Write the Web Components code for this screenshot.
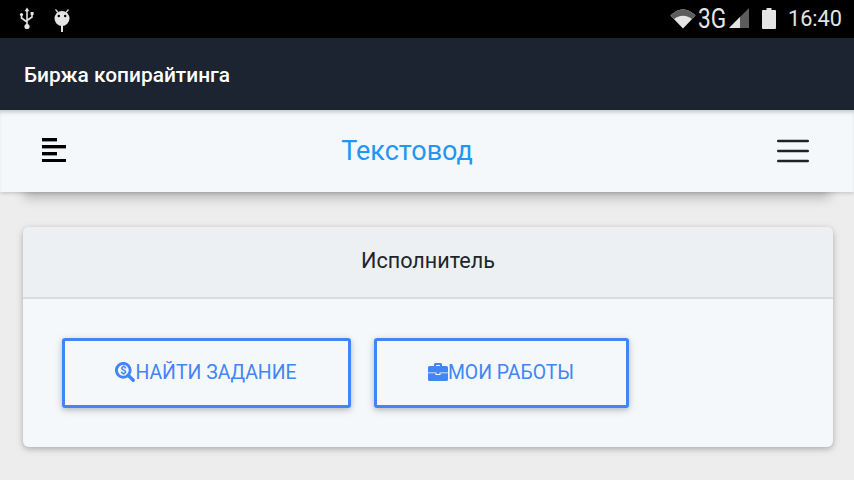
<!DOCTYPE html>
<html lang="ru">
<head>
<meta charset="utf-8">
<title>Текстовод</title>
<style>
  html, body { margin: 0; height: 100%; }
  body { background: #ededed; font-family: Roboto, "Liberation Sans", sans-serif; overflow: hidden; }
</style>
</head>
<body>
<status-bar></status-bar>
<app-title>Биржа копирайтинга</app-title>
<top-nav>Текстовод</top-nav>
<role-card heading="Исполнитель">
  <action-button icon="search" style="width:289px">НАЙТИ ЗАДАНИЕ</action-button>
  <action-button icon="case" style="width:255px">МОИ РАБОТЫ</action-button>
</role-card>

<script>
class StatusBar extends HTMLElement {
  constructor() {
    super();
    this.attachShadow({ mode: "open" });
    this.shadowRoot.innerHTML = `
<style>
:host { display: flex; align-items: center; height: 38px; background: #000; color: #e4e4e4; padding: 0 12px 0 19px; }
svg { display: block; flex-shrink: 0; }
.usb { margin-right: 18px; }
.sp { flex: 1; }
.up { margin-top: -2px; }
.net { display: block; width: 28px; font-size: 27px; font-weight: 400; line-height: 38px; margin-left: 2px; margin-top: -1px; transform: scaleX(.84); transform-origin: left center; white-space: nowrap; }
.sig { margin-left: 3px; }
.bat { margin-left: 13px; }
.time { font-size: 21.7px; line-height: 38px; margin-left: 12px; }
</style>
<svg class="usb" width="16" height="24" viewBox="0 0 16 24" fill="none" stroke="#e4e4e4" stroke-width="1.6">
  <path d="M8 3v15M8 15L2.5 11V8M8 13.5l5-3.500V7.500"/>
  <path d="M8 .5L5.6 4.2h4.800z" fill="#e4e4e4" stroke="none"/>
  <circle cx="8" cy="19.500" r="2.600" fill="#e4e4e4" stroke="none"/>
  <circle cx="2.500" cy="7.500" r="1.600" fill="#e4e4e4" stroke="none"/>
  <rect x="11.600" y="5" width="3" height="3" fill="#e4e4e4" stroke="none"/>
</svg>
<svg width="18" height="26" viewBox="0 0 18 26">
  <path d="M2.500 3.500L5 6.500M15.500 3.500L13 6.500" stroke="#e4e4e4" stroke-width="1.200" fill="none"/>
  <circle cx="9" cy="12.500" r="7.500" fill="#e4e4e4"/>
  <circle cx="5.800" cy="10" r="1.200" fill="#000"/><circle cx="12.200" cy="10" r="1.200" fill="#000"/>
  <rect x="8" y="19" width="2" height="7" fill="#e4e4e4"/>
</svg>
<div class="sp"></div>
<svg width="26" height="20" viewBox="0 0 26 20">
  <path d="M.5 6.500C3.800 3.200 8 .5 13 .5s9.200 2.700 12.500 6L13 19.500z" fill="#e4e4e4"/>
  <path d="M.5 6.500C3.800 3.200 8 .5 13 .5s9.200 2.700 12.500 6L22 10.200C19.700 8 16.600 6.700 13 6.700S6.300 8 4 10.200z" fill="#5c5c5c"/>
</svg>
<span class="net">3G</span>
<svg class="sig up" width="20" height="20" viewBox="0 0 20 20">
  <path d="M0 20L20 0v20z" fill="#5c5c5c"/>
  <path d="M0 20L11 9v11z" fill="#e4e4e4"/>
</svg>
<svg class="bat up" width="14" height="21" viewBox="0 0 14 21">
  <path d="M4.500 0h5v2H13a1 1 0 0 1 1 1v17a1 1 0 0 1-1 1H1a1 1 0 0 1-1-1V3a1 1 0 0 1 1-1h3.500z" fill="#e4e4e4"/>
</svg>
<span class="time">16:40</span>`;
  }
}

class AppTitle extends HTMLElement {
  constructor() {
    super();
    this.attachShadow({ mode: "open" });
    this.shadowRoot.innerHTML = `
<style>
:host { display: flex; align-items: center; height: 72px; background: #1c2331; color: #fff; padding: 2px 0 0 24px; font-size: 20.9px; font-weight: 500; box-sizing: border-box; }
</style>
<slot></slot>`;
  }
}

class TopNav extends HTMLElement {
  constructor() {
    super();
    this.attachShadow({ mode: "open" });
    this.shadowRoot.innerHTML = `
<style>
:host { display: block; position: relative; z-index: 1; height: 82px; background: #f4f8fb; box-shadow: 0 1px 4px rgba(0,0,0,.2), 0 30px 12px -24px rgba(0,0,0,.22), inset 0 4px 4px -2px rgba(0,0,0,.2); }
.row { display: flex; align-items: center; justify-content: space-between; height: 100%; padding: 0 45px 0 42px; }
.brand { color: #2196f3; font-size: 27px; margin-right: 28px; }
svg { display: block; }
.left { margin-top: -2px; }
</style>
<div class="row">
  <svg class="left" width="24" height="24" viewBox="0 0 24 24" fill="#000">
    <rect y="0" width="15" height="3.400"/><rect y="7" width="24" height="3.400"/>
    <rect y="14" width="15" height="3.400"/><rect y="21" width="24" height="3"/>
  </svg>
  <span class="brand"><slot></slot></span>
  <svg width="33" height="24" viewBox="0 0 33 24" fill="none" stroke="#222" stroke-width="2.400" stroke-linecap="round">
    <path d="M2.200 2h29.600M2.200 12h29.600M2.200 22h29.600"/>
  </svg>
</div>`;
  }
}

class RoleCard extends HTMLElement {
  constructor() {
    super();
    this.attachShadow({ mode: "open" });
    this.shadowRoot.innerHTML = `
<style>
:host { display: block; margin: 35px 21px 0 23px; height: 220px; background: #f4f8fb; border-radius: 6px; overflow: hidden; box-shadow: 0 2px 5px rgba(0,0,0,.18), 0 2px 10px rgba(0,0,0,.12); }
.head { height: 66px; padding-bottom: 4px; display: flex; align-items: center; justify-content: center; background: #ecf0f2; border-bottom: 2px solid #d9dcde; color: #212529; font-size: 21.6px; }
.body { display: flex; gap: 23px; padding: 39px 39px 0; }
</style>
<div class="head"></div>
<div class="body"><slot></slot></div>`;
    this.shadowRoot.querySelector(".head").textContent = this.getAttribute("heading");
  }
}

const ICONS = {
  search: `<svg width="20" height="20" viewBox="0 0 20 20">
    <circle cx="8.300" cy="8.300" r="6.900" fill="none" stroke="#4285f4" stroke-width="2.900"/>
    <path d="M13.200 13.200l5 5" stroke="#4285f4" stroke-width="3.400" stroke-linecap="round"/>
    <text x="8.300" y="12.200" font-size="11" font-weight="700" text-anchor="middle" fill="#4285f4">$</text>
  </svg>`,
  case: `<svg width="20" height="18" viewBox="0 0 20 18" fill="#4285f4">
    <path d="M6 3V1.500A1.500 1.500 0 0 1 7.500 0h5A1.500 1.500 0 0 1 14 1.500V3h4.500A1.500 1.500 0 0 1 20 4.500V9.500H0V4.500A1.500 1.500 0 0 1 1.500 3zm2-1v1h4V2z" fill-rule="evenodd"/>
    <path d="M0 10.300h7.500v1.700h5v-1.700H20v6.200a1.500 1.500 0 0 1-1.500 1.500h-17A1.500 1.500 0 0 1 0 16.500z"/>
    <rect x="8.500" y="8.500" width="3" height="2.500"/>
  </svg>`,
};

class ActionButton extends HTMLElement {
  constructor() {
    super();
    this.attachShadow({ mode: "open" });
    this.shadowRoot.innerHTML = `
<style>
:host { display: flex; align-items: center; justify-content: center; box-sizing: border-box; height: 70px; padding: 0 1px 2px 0; border: 3px solid #4285f4; border-radius: 3px; background: #f4f8fb; color: #4285f4; font-size: 19.4px; box-shadow: 0 2px 5px rgba(0,0,0,.16), 0 2px 10px rgba(0,0,0,.12); }
svg { display: block; flex-shrink: 0; }
</style>
${ICONS[this.getAttribute("icon")] || ""}<slot></slot>`;
  }
}

customElements.define("status-bar", StatusBar);
customElements.define("app-title", AppTitle);
customElements.define("top-nav", TopNav);
customElements.define("role-card", RoleCard);
customElements.define("action-button", ActionButton);
</script>
</body>
</html>
